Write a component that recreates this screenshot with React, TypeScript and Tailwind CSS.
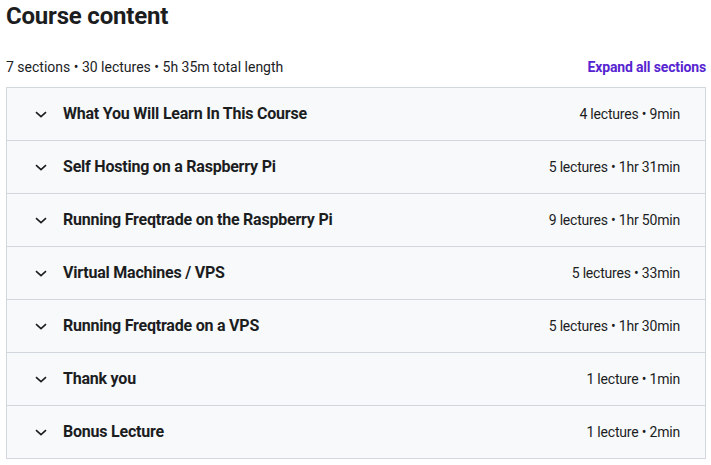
import React from "react";

const sections = [
  ["What You Will Learn In This Course", "4 lectures • 9min"],
  ["Self Hosting on a Raspberry Pi", "5 lectures • 1hr 31min"],
  ["Running Freqtrade on the Raspberry Pi", "9 lectures • 1hr 50min"],
  ["Virtual Machines / VPS", "5 lectures • 33min"],
  ["Running Freqtrade on a VPS", "5 lectures • 1hr 30min"],
  ["Thank you", "1 lecture • 1min"],
  ["Bonus Lecture", "1 lecture • 2min"],
];

export default function App() {
  return (
    <div className="w-[711px] h-[465px] bg-white pl-[6px] pr-[5px] text-[#1c1d1f]" style={{ fontFamily: "Roboto, 'Liberation Sans', sans-serif" }}>
      <h1 className="pt-[2px] text-[24px] leading-[29px] font-bold tracking-[-0.2px]">Course content</h1>
      <div className="mt-[26px] mb-[10px] flex items-center justify-between h-[20px]">
        <span className="text-[14px] leading-[20px]">7 sections • 30 lectures • 5h 35m total length</span>
        <span className="text-[14px] leading-[20px] font-bold text-[#5624d0] tracking-[-0.15px]">Expand all sections</span>
      </div>
      <div className="border border-[#d1d7dc] bg-[#f7f9fa]">
        {sections.map(([title, meta], i) => (
          <div key={i} className={`flex items-center h-[52px] pl-[25px] pr-[25px] ${i > 0 ? "border-t border-[#d1d7dc] h-[53px]" : ""}`}>
            <svg width="16" height="16" viewBox="0 0 16 16" className="shrink-0">
              <path d="M4 6.2 L9 10.6 L14 6.2" fill="none" stroke="#1c1d1f" strokeWidth="1.6" />
            </svg>
            <span className="ml-[15px] text-[16px] font-bold flex-1 tracking-[-0.22px]">{title}</span>
            <span className="text-[14px] tracking-[-0.2px]">{meta}</span>
          </div>
        ))}
      </div>
    </div>
  );
}
